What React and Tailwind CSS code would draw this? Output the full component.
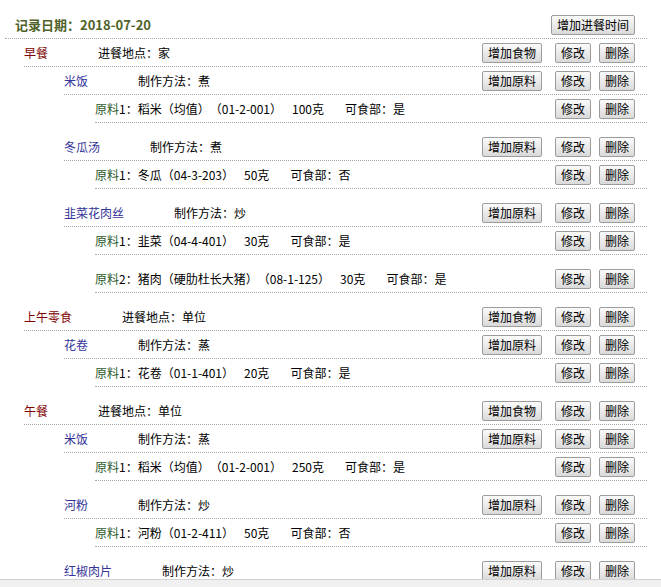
import React from "react";

const meals = [
  {
    name: "早餐",
    place: "家",
    foods: [
      { name: "米饭", method: "煮", ings: [{ n: 1, name: "稻米（均值）", code: "01-2-001", amt: "100克", edible: "是" }] },
      { name: "冬瓜汤", method: "煮", ings: [{ n: 1, name: "冬瓜", code: "04-3-203", amt: "50克", edible: "否" }] },
      {
        name: "韭菜花肉丝",
        method: "炒",
        ings: [
          { n: 1, name: "韭菜", code: "04-4-401", amt: "30克", edible: "是" },
          { n: 2, name: "猪肉（硬肋杜长大猪）", code: "08-1-125", amt: "30克", edible: "是" },
        ],
      },
    ],
  },
  {
    name: "上午零食",
    place: "单位",
    foods: [{ name: "花卷", method: "蒸", ings: [{ n: 1, name: "花卷", code: "01-1-401", amt: "20克", edible: "是" }] }],
  },
  {
    name: "午餐",
    place: "单位",
    foods: [
      { name: "米饭", method: "蒸", ings: [{ n: 1, name: "稻米（均值）", code: "01-2-001", amt: "250克", edible: "是" }] },
      { name: "河粉", method: "炒", ings: [{ n: 1, name: "河粉", code: "01-2-411", amt: "50克", edible: "否" }] },
      { name: "红椒肉片", method: "炒", ings: [] },
    ],
  },
];

function Btn({ children, className = "" }) {
  return (
    <button
      className={
        "inline-flex h-[20px] items-center justify-center rounded-[2px] border border-[#9c9c9c] bg-linear-to-b from-[#fbfbfb] to-[#dadada] px-[5px] text-[12px] leading-none text-black " +
        className
      }
    >
      {children}
    </button>
  );
}

function Actions({ add }) {
  return (
    <div className="flex items-center">
      {add && <Btn className="mr-[13px]">{add}</Btn>}
      <Btn>修改</Btn>
      <Btn className="ml-[8px]">删除</Btn>
    </div>
  );
}

export default function App() {
  return (
    <div className="h-screen overflow-hidden bg-white font-['Noto_Sans_CJK_SC',sans-serif] text-[12px] text-black [text-spacing-trim:space-all]">
      <div className="ml-[5px] w-[642px] pt-[11px]">
        <div className="flex h-[28px] items-center justify-between border-b border-dotted border-[#a8a8a8] pl-[10px] pr-[12px]">
          <span className="text-[13px] font-bold text-[#4f6228]">记录日期：2018-07-20</span>
          <Btn>增加进餐时间</Btn>
        </div>
        {meals.map((m, mi) => (
          <div key={mi} className="ml-[19px]">
            <div className="flex h-[28px] items-center justify-between border-b border-dotted border-[#a8a8a8] pr-[12px]">
              <div className="flex items-center">
                <span className="text-[#800000]">{m.name}</span>
                <span className="ml-[50px]">进餐地点：{m.place}</span>
              </div>
              <Actions add="增加食物" />
            </div>
            {m.foods.map((f, fi) => (
              <div key={fi} className="ml-[40px]">
                <div className="flex h-[28px] items-center justify-between border-b border-dotted border-[#a8a8a8] pr-[12px]">
                  <div className="flex items-center">
                    <span className="text-[#333399]">{f.name}</span>
                    <span className="ml-[50px]">制作方法：{f.method}</span>
                  </div>
                  <Actions add="增加原料" />
                </div>
                {f.ings.map((g, gi) => (
                  <div
                    key={gi}
                    className="mb-[10px] ml-[31px] flex h-[28px] items-center justify-between border-b border-dotted border-[#a8a8a8] pr-[12px]"
                  >
                    <div className="flex items-center whitespace-nowrap">
                      <span>
                        <span className="text-[#2b5a2b]">原料</span>
                        {g.n}：{g.name}（{g.code}）
                      </span>
                      <span className="ml-[10px]">{g.amt}</span>
                      <span className="ml-[21px]">可食部：{g.edible}</span>
                    </div>
                    <Actions />
                  </div>
                ))}
              </div>
            ))}
          </div>
        ))}
      </div>
      <div className="fixed bottom-0 left-0 right-0 h-[8px] border-t border-[#d2d2d2] bg-[#f0f0f0]" />
    </div>
  );
}
